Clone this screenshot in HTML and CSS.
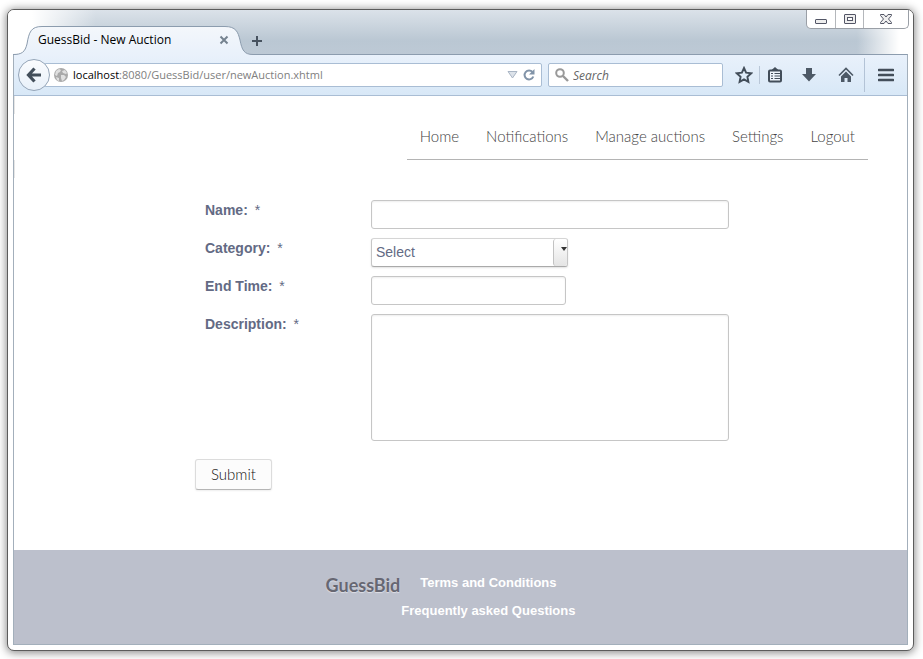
FILE: index.html
```html
<!DOCTYPE html>
<html lang="en">
<head>
<meta charset="utf-8">
<title>GuessBid - New Auction</title>
<link rel="stylesheet" href="styles.css">
</head>
<body>
<div class="window">
  <header class="titlebar">
    <div class="tab">
      <svg class="tab-shape" width="240" height="29" viewBox="0 0 240 29" aria-hidden="true">
        <defs><linearGradient id="tabfill" x1="0" y1="0" x2="0" y2="1"><stop offset="0" stop-color="#f4f7fb"/><stop offset="1" stop-color="#e9f1fb"/></linearGradient></defs>
        <path d="M0 29V28.500C9 28.500 12 26 14 18C16 6 18 .5 29 .5H212C223 .5 225 6 227 14C229 24 231 28.500 240 28.500V29Z" fill="url(#tabfill)"/>
        <path d="M0 28.500C9 28.500 12 26 14 18C16 6 18 .5 29 .5H212C223 .5 225 6 227 14C229 24 231 28.500 240 28.500" fill="none" stroke="#8c9cae"/>
      </svg>
      <span class="tab-title">GuessBid - New Auction</span>
      <button class="tab-close" type="button" aria-label="Close tab"><svg width="10" height="10" viewBox="0 0 10 10"><path d="M1.500 1.500l7 7M8.500 1.500l-7 7" stroke="#75828f" stroke-width="2"/></svg></button>
    </div>
    <button class="tab-new" type="button" aria-label="New tab"><svg width="12" height="12" viewBox="0 0 12 12"><path d="M6 1v10M1 6h10" stroke="#47525f" stroke-width="2"/></svg></button>
    <div class="controls">
      <button class="control" type="button" aria-label="Minimize"><svg width="14" height="18" viewBox="0 0 14 18"><rect x="1.500" y="9.500" width="11" height="4" rx=".5" fill="#eee" stroke="#535666"/></svg></button>
      <button class="control" type="button" aria-label="Maximize"><svg width="14" height="18" viewBox="0 0 14 18"><rect x="1.500" y="4.500" width="11" height="9" rx=".5" fill="#eee" stroke="#535666"/><rect x="4.500" y="7.500" width="5" height="3" fill="#fff" stroke="#535666"/></svg></button>
      <button class="control control-close" type="button" aria-label="Close"><svg width="14" height="18" viewBox="0 0 14 18"><path d="M1.500 4.500h3.500l2 2.500 2-2.500h3.500v1L9.500 9l3 3.500v1H9l-2-2.500-2 2.500H1.500v-1l3-3.500-3-3.500z" fill="#eee" stroke="#535666"/></svg></button>
    </div>
  </header>
  <div class="frame">
    <div class="toolbar">
      <button class="back" type="button" aria-label="Back"><svg width="16" height="16" viewBox="0 0 16 16"><path d="M8.500 1.500L2.500 8l6 6.500M3 8h12" fill="none" stroke="#434e5a" stroke-width="3.200"/></svg></button>
      <div class="address">
        <svg width="14" height="14" viewBox="0 0 14 14" aria-hidden="true"><circle cx="7" cy="7" r="7" fill="#aaa"/><path d="M2 3l3-2 2 1-1 2-2 1-1 3-2-1zM8 3l3-1 2 3-1 1-3-1zM7 7l3 0 2 2-2 3-2 1-1-3zM2 9l3 1v3l-2-1z" fill="#e0e0e0"/></svg>
        <span class="url"><span class="host">localhost</span>:8080/GuessBid/user/newAuction.xhtml</span>
        <svg width="11" height="8" viewBox="0 0 11 8" aria-hidden="true"><path d="M1 .5h9L5.500 7z" fill="#dce2e9" stroke="#a9b5c4"/></svg>
        <button class="reload" type="button" aria-label="Reload"><svg width="12" height="12" viewBox="0 0 12 12"><path d="M9.500 3A4.500 4.500 0 1 0 10.300 7.500" fill="none" stroke="#8193a8" stroke-width="2"/><path d="M11.500 0v5.500H6z" fill="#8193a8"/></svg></button>
      </div>
      <div class="search">
        <svg class="search-icon" width="14" height="14" viewBox="0 0 14 14" aria-hidden="true"><circle cx="5" cy="5" r="3.800" fill="none" stroke="#999" stroke-width="2"/><path d="M8 8l5 5" stroke="#999" stroke-width="2.400"/></svg>
        <input class="search-input" type="search" placeholder="Search" aria-label="Search">
      </div>
      <div class="tools">
        <button class="tool" type="button" aria-label="Bookmark"><svg width="18" height="18" viewBox="0 0 18 18"><path d="M9 2l2.100 4.700 5.100.6-3.800 3.500 1 5.100L9 13.400l-4.400 2.500 1-5.100L1.800 7.300l5.100-.6z" fill="none" stroke="#434e5a" stroke-width="1.900"/></svg></button>
        <span class="rule"></span>
        <button class="tool" type="button" aria-label="Bookmarks list"><svg width="16" height="16" viewBox="0 0 16 16"><path d="M4 3.500L8 0l4 3.500z" fill="#434e5a"/><rect x="2" y="3.500" width="12" height="11" rx="1" fill="#eef4fb" stroke="#434e5a" stroke-width="2"/><path d="M4 6.500h2M7.500 6.500H13M4 9h2M7.500 9H13M4 11.500h2M7.500 11.500H13" stroke="#434e5a" stroke-width="1.200"/></svg></button>
        <button class="tool tool-wide" type="button" aria-label="Downloads"><svg width="16" height="16" viewBox="0 0 16 16"><path d="M5 1h6v6h4l-7 7.500L1 7h4z" fill="#4d5966"/></svg></button>
        <button class="tool tool-wide" type="button" aria-label="Home page"><svg width="16" height="16" viewBox="0 0 16 16"><path d="M1 8.500l7-7 7 7" fill="none" stroke="#4d5966" stroke-width="1.600"/><path d="M3 9.500l5-5 5 5V15H9.500v-4h-3v4H3z" fill="#4d5966"/></svg></button>
        <span class="rule rule-tall"></span>
        <button class="tool tool-menu" type="button" aria-label="Menu"><svg width="16" height="14" viewBox="0 0 16 14"><path d="M1 2h14M1 7h14M1 12h14" stroke="#434e5a" stroke-width="2.600" stroke-linecap="round"/></svg></button>
      </div>
    </div>
    <main class="page">
      <nav class="nav">
        <a href="#">Home</a>
        <a href="#">Notifications</a>
        <a href="#">Manage auctions</a>
        <a href="#">Settings</a>
        <a href="#">Logout</a>
      </nav>
      <form class="auction">
        <div class="fields">
          <label class="label" for="name">Name: <span class="star">*</span></label>
          <input class="field" id="name" type="text">
          <label class="label" for="category">Category: <span class="star">*</span></label>
          <div class="picker">
            <select class="field" id="category"><option>Select</option></select>
            <span class="picker-arrow"></span>
          </div>
          <label class="label" for="end">End Time: <span class="star">*</span></label>
          <input class="field field-short" id="end" type="text">
          <label class="label" for="description">Description: <span class="star">*</span></label>
          <textarea class="field field-tall" id="description"></textarea>
        </div>
        <button class="submit" type="button">Submit</button>
      </form>
    </main>
    <footer class="footer">
      <a class="brand" href="#">GuessBid</a>
      <div class="links">
        <a href="#">Terms and Conditions</a>
        <a href="#">Frequently asked Questions</a>
      </div>
    </footer>
  </div>
</div>
</body>
</html>
```
FILE: styles.css
```css
* { box-sizing: border-box; }

body {
  margin: 0;
  background: #fff;
  font-family: "Liberation Sans", Arial, sans-serif;
  font-size: 14px;
}

button { border: 0; padding: 0; background: none; font: inherit; }
a { text-decoration: none; color: inherit; }
svg { display: block; flex: none; }

.window {
  display: flex;
  flex-direction: column;
  min-height: calc(100vh - 17px);
  margin: 9px 9px 8px 7px;
  border: 1px solid #5c5c5c;
  border-radius: 7px;
  background: #fff;
  box-shadow: 0 1px 8px 1px rgba(0, 0, 0, 0.45);
}

.titlebar {
  display: flex;
  align-items: flex-end;
  height: 44px;
  padding: 0 4px 0 5px;
  border-radius: 6px 6px 0 0;
  background:
    linear-gradient(90deg, #fff 24px, rgba(255, 255, 255, 0) 88px),
    linear-gradient(270deg, #fff 14px, rgba(255, 255, 255, 0) 56px),
    linear-gradient(#dbe2e9, #bac7d3 70%, #bdc9d5);
}

.tab {
  position: relative;
  z-index: 1;
  display: flex;
  align-items: center;
  justify-content: space-between;
  width: 240px;
  height: 28px;
  padding: 0 24px 0 25px;
  font: 12px/28px "Open Sans", "Noto Sans", sans-serif;
  color: #000;
}

.tab-shape { position: absolute; left: 0; top: 0; }
.tab-title { position: relative; }
.tab-close { position: relative; }
.tab-new { margin: 0 0 7px -2px; }

.controls {
  display: flex;
  align-self: flex-start;
  margin-left: auto;
  border: 1px solid #9a9fa6;
  border-top: 0;
  border-radius: 0 0 5px 5px;
  background: #fff;
}
.control { display: flex; justify-content: center; width: 28px; height: 18px; }
.control + .control { border-left: 1px solid #b4b7bb; }
.control-close.control { width: 45px; }

.frame {
  display: flex;
  flex: 1;
  flex-direction: column;
  margin: 0 5px 5px;
  border: 1px solid #a3afbb;
  border-top-color: #8c9cae;
}

.toolbar {
  display: flex;
  align-items: center;
  height: 41px;
  padding-left: 4px;
  border-bottom: 1px solid #a9bdd4;
  background: linear-gradient(#e9f1fb, #d8e8f7);
}

.back {
  position: relative;
  display: flex;
  align-items: center;
  justify-content: center;
  width: 32px;
  height: 32px;
  border: 1px solid #95a5b8;
  border-radius: 50%;
  background: linear-gradient(#fbfcfe, #e8f0f9);
}

.address {
  display: flex;
  flex: 1;
  align-items: center;
  gap: 5px;
  height: 24px;
  margin-left: -6px;
  padding: 0 6px 0 9px;
  border: 1px solid #a9bdd4;
  border-radius: 2px;
  background: #fff;
  font: 11px/22px "Open Sans", "Noto Sans", sans-serif;
  color: #808080;
}
.url { flex: 1; white-space: nowrap; }
.host { color: #000; }

.search { position: relative; width: 175px; margin-left: 6px; }
.search-icon { position: absolute; left: 7px; top: 5px; }
.search-input {
  display: block;
  width: 100%;
  height: 24px;
  padding: 0 6px 0 24px;
  border: 1px solid #a9bdd4;
  border-radius: 2px;
  outline: 0;
  background: #fff;
  appearance: none;
  font: 12px/22px "Open Sans", "Noto Sans", sans-serif;
}
.search-input::placeholder { color: #666; font-style: italic; opacity: 1; }

.tools { display: flex; align-items: center; margin-left: 6px; }
.tool { display: flex; justify-content: center; width: 30px; }
.tool-wide { width: 37px; }
.tool-menu { width: 42px; }
.rule { width: 1px; height: 18px; background: #b9c7d8; }
.rule-tall { height: 34px; background: #b3c3d6; }

.page {
  flex: 1;
  padding: 18px 39px 60px 181px;
  background:
    linear-gradient(#e6e6e6 18px, #fff 18px, #fff 64px, #e6e6e6 64px, #e6e6e6 82px, #fff 82px) 0 0 / 1px 100% no-repeat,
    #fff;
}

.nav {
  display: flex;
  gap: 27px;
  width: fit-content;
  margin-left: auto;
  padding: 0 13px;
  border-bottom: 1px solid #b4b4b4;
  font: 300 15px/45px Lato, sans-serif;
  color: #444;
}
.nav a { white-space: nowrap; }

.auction { padding-top: 40px; }
.fields {
  display: grid;
  grid-template-columns: 156px minmax(0, 358px);
  gap: 9px 10px;
  padding-left: 10px;
}
.label { font-weight: bold; line-height: 20px; color: #636a84; }
.star { margin-left: 3px; font-weight: normal; }

.field {
  display: block;
  width: 100%;
  height: 29px;
  margin: 0;
  padding: 4px;
  border: 1px solid #c6c6c6;
  border-radius: 3px;
  outline: 0;
  background: #fff;
  box-shadow: inset 0 1px 2px #eee;
  font: 14px/19px "Liberation Sans", Arial, sans-serif;
  color: #636a84;
}
.field-short { width: 195px; }
.field-tall { height: 127px; resize: none; }

.picker { position: relative; width: 197px; }
.picker .field {
  appearance: none;
  border-color: #d5d5d5 #c6c6c6 #aaa;
  box-shadow: 0 1px 2px #e2e2e2;
}
.picker-arrow {
  position: absolute;
  top: 1px;
  right: 1px;
  width: 14px;
  height: 27px;
  border-left: 1px solid #c2c2c2;
  border-radius: 3px;
  background: linear-gradient(#fff, #e4e4e4);
  pointer-events: none;
}
.picker-arrow::after {
  content: "";
  position: absolute;
  top: 8px;
  right: 0;
  border: 3px solid transparent;
  border-top: 4px solid #333;
  border-bottom: 0;
}

.submit {
  display: block;
  margin-top: 18px;
  padding: 0 15px;
  border: 1px solid #dcdcdc;
  border-bottom-color: #b5b5b5;
  border-radius: 3px;
  background: #fcfcfc;
  box-shadow: 0 1px 2px #eee;
  font: 300 15px/29px Lato, sans-serif;
  color: #111;
}

.footer {
  display: flex;
  justify-content: center;
  gap: 1px;
  padding: 19px 20px 19px 0;
  background: #bcc0cc;
}
.brand {
  font: bold 18px/32px Lato, sans-serif;
  color: #666772;
  text-shadow: 0 1px 1px #dedfe6;
}
.links {
  display: flex;
  flex-direction: column;
  align-items: center;
  font-size: 13px;
  font-weight: bold;
  line-height: 28px;
  color: #fff;
}
```
